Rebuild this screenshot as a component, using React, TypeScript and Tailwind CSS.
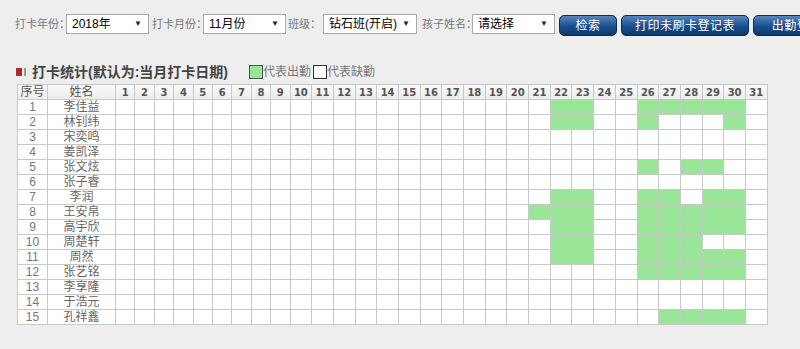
import React from 'react';

const names = [
  '李佳益', '林钊纬', '宋奕鸣', '姜凯泽', '张文炫',
  '张子睿', '李润', '王安帛', '高宇欣', '周楚轩',
  '周然', '张艺铭', '李享隆', '于浩元', '孔祥鑫',
];

// days present, keyed by row number
const present: Record<number, number[]> = {
  1: [22, 23, 26, 27, 28, 29, 30],
  2: [22, 23, 26, 30],
  5: [26, 28, 29],
  7: [22, 23, 26, 27, 29, 30],
  8: [21, 22, 23, 26, 27, 28, 29, 30],
  9: [22, 23, 26, 27, 28, 29, 30],
  10: [22, 23, 26, 27, 28],
  11: [22, 23, 26, 27, 28, 29, 30],
  12: [26, 27, 28, 29, 30],
  15: [27, 28, 29, 30],
};

const days = Array.from({ length: 31 }, (_, i) => i + 1);

function FakeSelect({ value, width }: { value: string; width: string }) {
  return (
    <div className={`${width} h-[20px] shrink-0 bg-white border border-[#a9a9a9] flex items-center justify-between pl-[5px] pr-[6px] text-[12px] text-black`}>
      <span>{value}</span>
      <span className="text-[8px] text-[#222]">▼</span>
    </div>
  );
}

function BlueButton({ label, width }: { label: string; width: string }) {
  return (
    <button className={`${width} h-[21px] mt-[1px] shrink-0 rounded-[5px] border border-[#0b2d57] bg-linear-to-b from-[#5686bd] via-[#1c5291] to-[#0c3869] text-white text-[12px] tracking-[0.5px] leading-none`}>
      {label}
    </button>
  );
}

export default function App() {
  return (
    <div className="w-[800px] h-[349px] overflow-hidden bg-[#eeeeee] font-['Liberation_Sans','Noto_Sans_CJK_SC',sans-serif]">
      {/* Search bar */}
      <div className="flex items-start pt-[14px] pl-[15px] whitespace-nowrap text-[11px] text-[#777]">
        <span className="w-[51px] shrink-0 leading-[20px]">打卡年份：</span>
        <FakeSelect value="2018年" width="w-[83px]" />
        <span className="w-[51px] shrink-0 ml-[3px] leading-[20px]">打卡月份：</span>
        <FakeSelect value="11月份" width="w-[83px]" />
        <span className="w-[35px] shrink-0 ml-[2px] leading-[20px]">班级：</span>
        <FakeSelect value="钻石班(开启)" width="w-[94px]" />
        <span className="w-[50px] shrink-0 ml-[5px] leading-[20px]">孩子姓名：</span>
        <FakeSelect value="请选择" width="w-[83px]" />
        <div className="flex gap-[4px] ml-[4px]">
          <BlueButton label="检索" width="w-[58px]" />
          <BlueButton label="打印未刷卡登记表" width="w-[128px]" />
          <BlueButton label="出勤登记表" width="w-[100px]" />
        </div>
      </div>

      {/* Title + legend */}
      <div className="flex items-center h-[16px] mt-[28px] pl-[16px]">
        <span className="w-[6px] h-[8px] bg-[#b3262b]" />
        <span className="w-[2px] h-[8px] ml-[2px] bg-[#999]" />
        <span className="w-[217px] ml-[6px] text-[14px] font-bold text-[#444] leading-[16px] whitespace-nowrap">
          打卡统计(默认为:当月打卡日期)
        </span>
        <span className="w-[14px] h-[14px] border border-[#555] bg-[#99e699]" />
        <span className="text-[12px] text-[#777] leading-[14px]">代表出勤</span>
        <span className="w-[14px] h-[14px] ml-[2px] border border-[#333] bg-white" />
        <span className="text-[12px] text-[#777] leading-[14px]">代表缺勤</span>
      </div>

      {/* Attendance grid */}
      <table className="ml-[17px] mt-[4px] border-collapse table-fixed w-[750px] bg-white">
        <colgroup>
          <col className="w-[30px]" />
          <col className="w-[68px]" />
          {days.map((d) => (
            <col key={d} className={d < 10 ? 'w-[19.4px]' : 'w-[21.7px]'} />
          ))}
        </colgroup>
        <thead>
          <tr className="h-[15px] bg-linear-to-b from-[#fafafa] to-[#ececec]">
            <th className="p-0 border border-[#c8c8c8] text-[12px] font-normal text-[#555] leading-[13px]">序号</th>
            <th className="p-0 border border-[#c8c8c8] text-[12px] font-normal text-[#555] leading-[13px]">姓名</th>
            {days.map((d) => (
              <th key={d} className="p-0 border border-[#c8c8c8] font-['DejaVu_Sans',sans-serif] text-[10px] font-bold text-[#555] leading-[13px]">
                {d}
              </th>
            ))}
          </tr>
        </thead>
        <tbody>
          {names.map((name, i) => {
            const row = i + 1;
            const on = present[row] || [];
            return (
              <tr key={row} className="h-[15px]">
                <td className="p-0 border border-[#c8c8c8] text-center text-[12px] text-[#777] leading-[13px]">{row}</td>
                <td className="p-0 border border-[#c8c8c8] text-center text-[12px] text-[#666] leading-[13px]">{name}</td>
                {days.map((d) => (
                  <td
                    key={d}
                    className={`p-0 border border-[#c8c8c8] ${on.includes(d) ? 'bg-[#99e699]' : 'bg-white'}`}
                  />
                ))}
              </tr>
            );
          })}
        </tbody>
      </table>
    </div>
  );
}
